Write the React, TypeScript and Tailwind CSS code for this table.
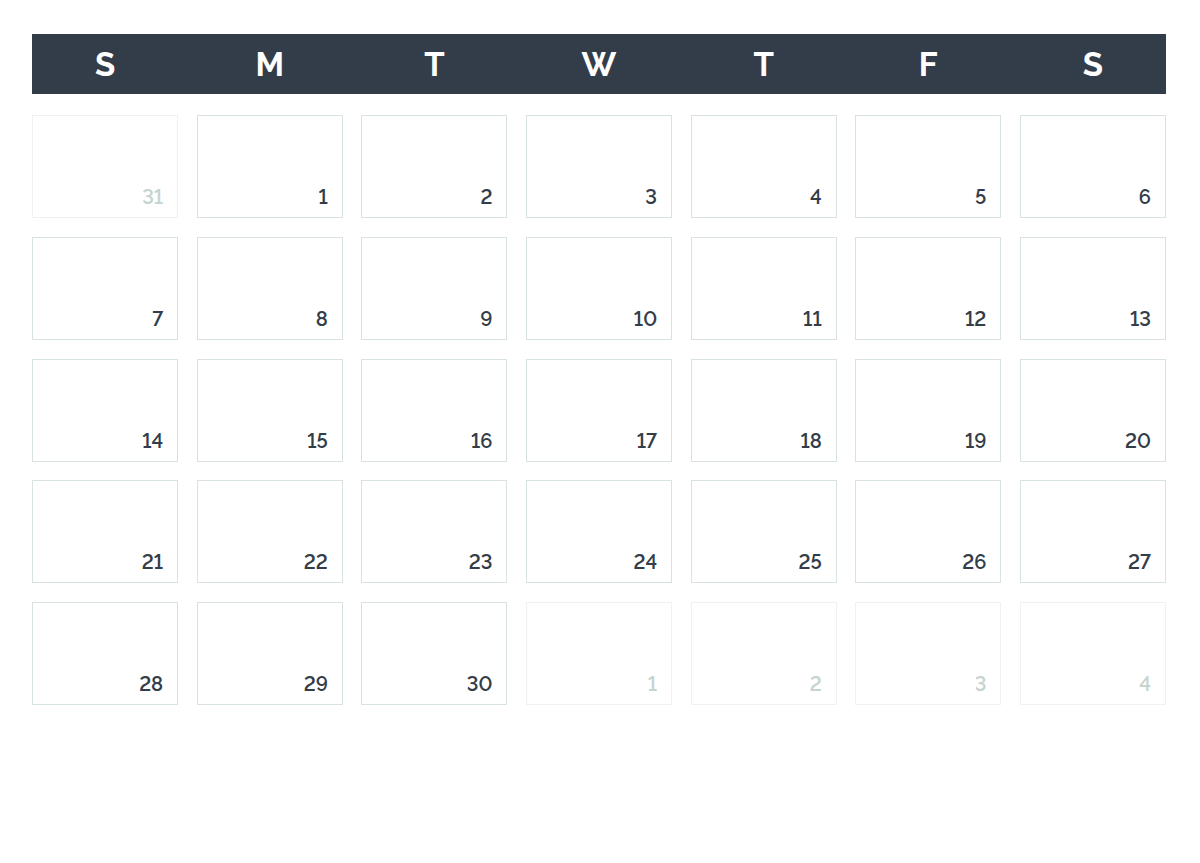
import React from "react";

const days = ["S", "M", "T", "W", "T", "F", "S"];

type Cell = { n: number; muted: boolean };

const cells: Cell[] = [
  { n: 31, muted: true },
  ...Array.from({ length: 30 }, (_, i) => ({ n: i + 1, muted: false })),
  { n: 1, muted: true },
  { n: 2, muted: true },
  { n: 3, muted: true },
  { n: 4, muted: true },
];

export default function App() {
  return (
    <div
      className="w-[1200px] h-[863px] bg-white pt-[34px] pl-[32px]"
      style={{ fontFamily: "Raleway, Lato, 'Open Sans', sans-serif" }}
    >
      <div className="w-[1134px]">
        <div className="grid grid-cols-7 gap-x-[18.5px] h-[60px] bg-[#333d49] items-center">
          {days.map((d, i) => (
            <div
              key={i}
              className="text-center text-white text-[33px] font-bold leading-none"
            >
              {d}
            </div>
          ))}
        </div>
        <div className="mt-[21px] grid grid-cols-7 gap-x-[18.5px] gap-y-[18.75px]">
          {cells.map((c, i) => (
            <div
              key={i}
              className={`h-[103px] border flex items-end justify-end pr-[14px] pb-[10px] ${
                c.muted ? "border-[#eef2f1]" : "border-[#d8e3e0]"
              }`}
            >
              <span
                className={`text-[20px] font-semibold leading-none lining-nums tabular-nums ${
                  c.muted ? "text-[#c5d4d0]" : "text-[#333d49]"
                }`}
              >
                {c.n}
              </span>
            </div>
          ))}
        </div>
      </div>
    </div>
  );
}
